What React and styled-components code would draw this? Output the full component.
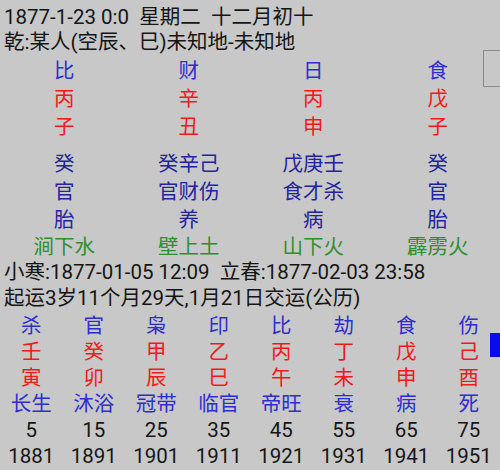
import React from 'react'
import styled, { createGlobalStyle } from 'styled-components'

const GlobalStyle = createGlobalStyle`
  html, body {
    margin: 0;
    padding: 0;
    background: #c8c8c8;
  }
  body {
    font-family: "Roboto", "Noto Sans CJK SC", sans-serif;
  }
`

const Page = styled.div`
  position: relative;
  width: 500px;
  height: 470px;
  overflow: hidden;
  background: #c8c8c8;
  padding-top: 5px;
  box-sizing: border-box;
`

const Line = styled.div`
  padding-left: 4px;
  font-size: 20.5px;
  line-height: ${p => p.$h || 25}px;
  color: #151515;
  white-space: pre;
`

const FourGrid = styled.div`
  display: grid;
  grid-template-columns: repeat(4, 1fr);
  margin-top: ${p => p.$top || 0}px;
  padding-left: 2px;
`

const EightGrid = styled.div`
  display: grid;
  grid-template-columns: repeat(8, 1fr);
  margin-top: ${p => p.$top || 0}px;
`

const colors = {
  god: '#2e2ed0',
  stem: '#f01a1a',
  hidden: '#23239e',
  nayin: '#2f8f2f',
  num: '#151515',
}

const Cell = styled.div`
  text-align: center;
  font-size: 20.5px;
  line-height: ${p => p.$h || 28}px;
  color: ${p => colors[p.$kind]};
  white-space: nowrap;
`

const SideTab = styled.div`
  position: absolute;
  right: -4px;
  top: 50px;
  width: 21px;
  height: 37px;
  border: 1.5px solid #8a8a8a;
  box-sizing: border-box;
`

const ScrollMark = styled.div`
  position: absolute;
  right: 0;
  top: 333px;
  width: 10px;
  height: 24px;
  background: #0a0aee;
`

const pillars = [
  { god: '比', stem: '丙', branch: '子', hs: '癸', hg: '官', stage: '胎', ny: '涧下水' },
  { god: '财', stem: '辛', branch: '丑', hs: '癸辛己', hg: '官财伤', stage: '养', ny: '壁上土' },
  { god: '日', stem: '丙', branch: '申', hs: '戊庚壬', hg: '食才杀', stage: '病', ny: '山下火' },
  { god: '食', stem: '戊', branch: '子', hs: '癸', hg: '官', stage: '胎', ny: '霹雳火' },
]

const luck = [
  ['杀', '壬', '寅', '长生', '5', '1881'],
  ['官', '癸', '卯', '沐浴', '15', '1891'],
  ['枭', '甲', '辰', '冠带', '25', '1901'],
  ['印', '乙', '巳', '临官', '35', '1911'],
  ['比', '丙', '午', '帝旺', '45', '1921'],
  ['劫', '丁', '未', '衰', '55', '1931'],
  ['食', '戊', '申', '病', '65', '1941'],
  ['伤', '己', '酉', '死', '75', '1951'],
]

const luckKinds = ['god', 'stem', 'stem', 'god', 'num', 'num']

export default function App() {
  return (
    <>
      <GlobalStyle />
      <Page>
        <Line>{'1877-1-23 0:0  星期二  十二月初十'}</Line>
        <Line>乾:某人(空辰、巳)未知地-未知地</Line>

        <FourGrid $top={2}>
          {['god', 'stem', 'branch'].map(k =>
            pillars.map((p, i) => (
              <Cell key={k + i} $kind={k === 'god' ? 'god' : 'stem'}>{p[k]}</Cell>
            ))
          )}
        </FourGrid>

        <FourGrid $top={9}>
          {['hs', 'hg', 'stage'].map(k =>
            pillars.map((p, i) => (
              <Cell key={k + i} $kind="hidden">{p[k]}</Cell>
            ))
          )}
          {pillars.map((p, i) => (
            <Cell key={'ny' + i} $kind="nayin" $h={26}>{p.ny}</Cell>
          ))}
        </FourGrid>

        <Line $h={25}>{'小寒:1877-01-05 12:09  立春:1877-02-03 23:58'}</Line>
        <Line $h={26}>起运3岁11个月29天,1月21日交运(公历)</Line>

        <EightGrid $top={2}>
          {luckKinds.map((kind, r) =>
            luck.map((col, i) => (
              <Cell key={r + '-' + i} $kind={kind} $h={26}>{col[r]}</Cell>
            ))
          )}
        </EightGrid>

        <SideTab />
        <ScrollMark />
      </Page>
    </>
  )
}
